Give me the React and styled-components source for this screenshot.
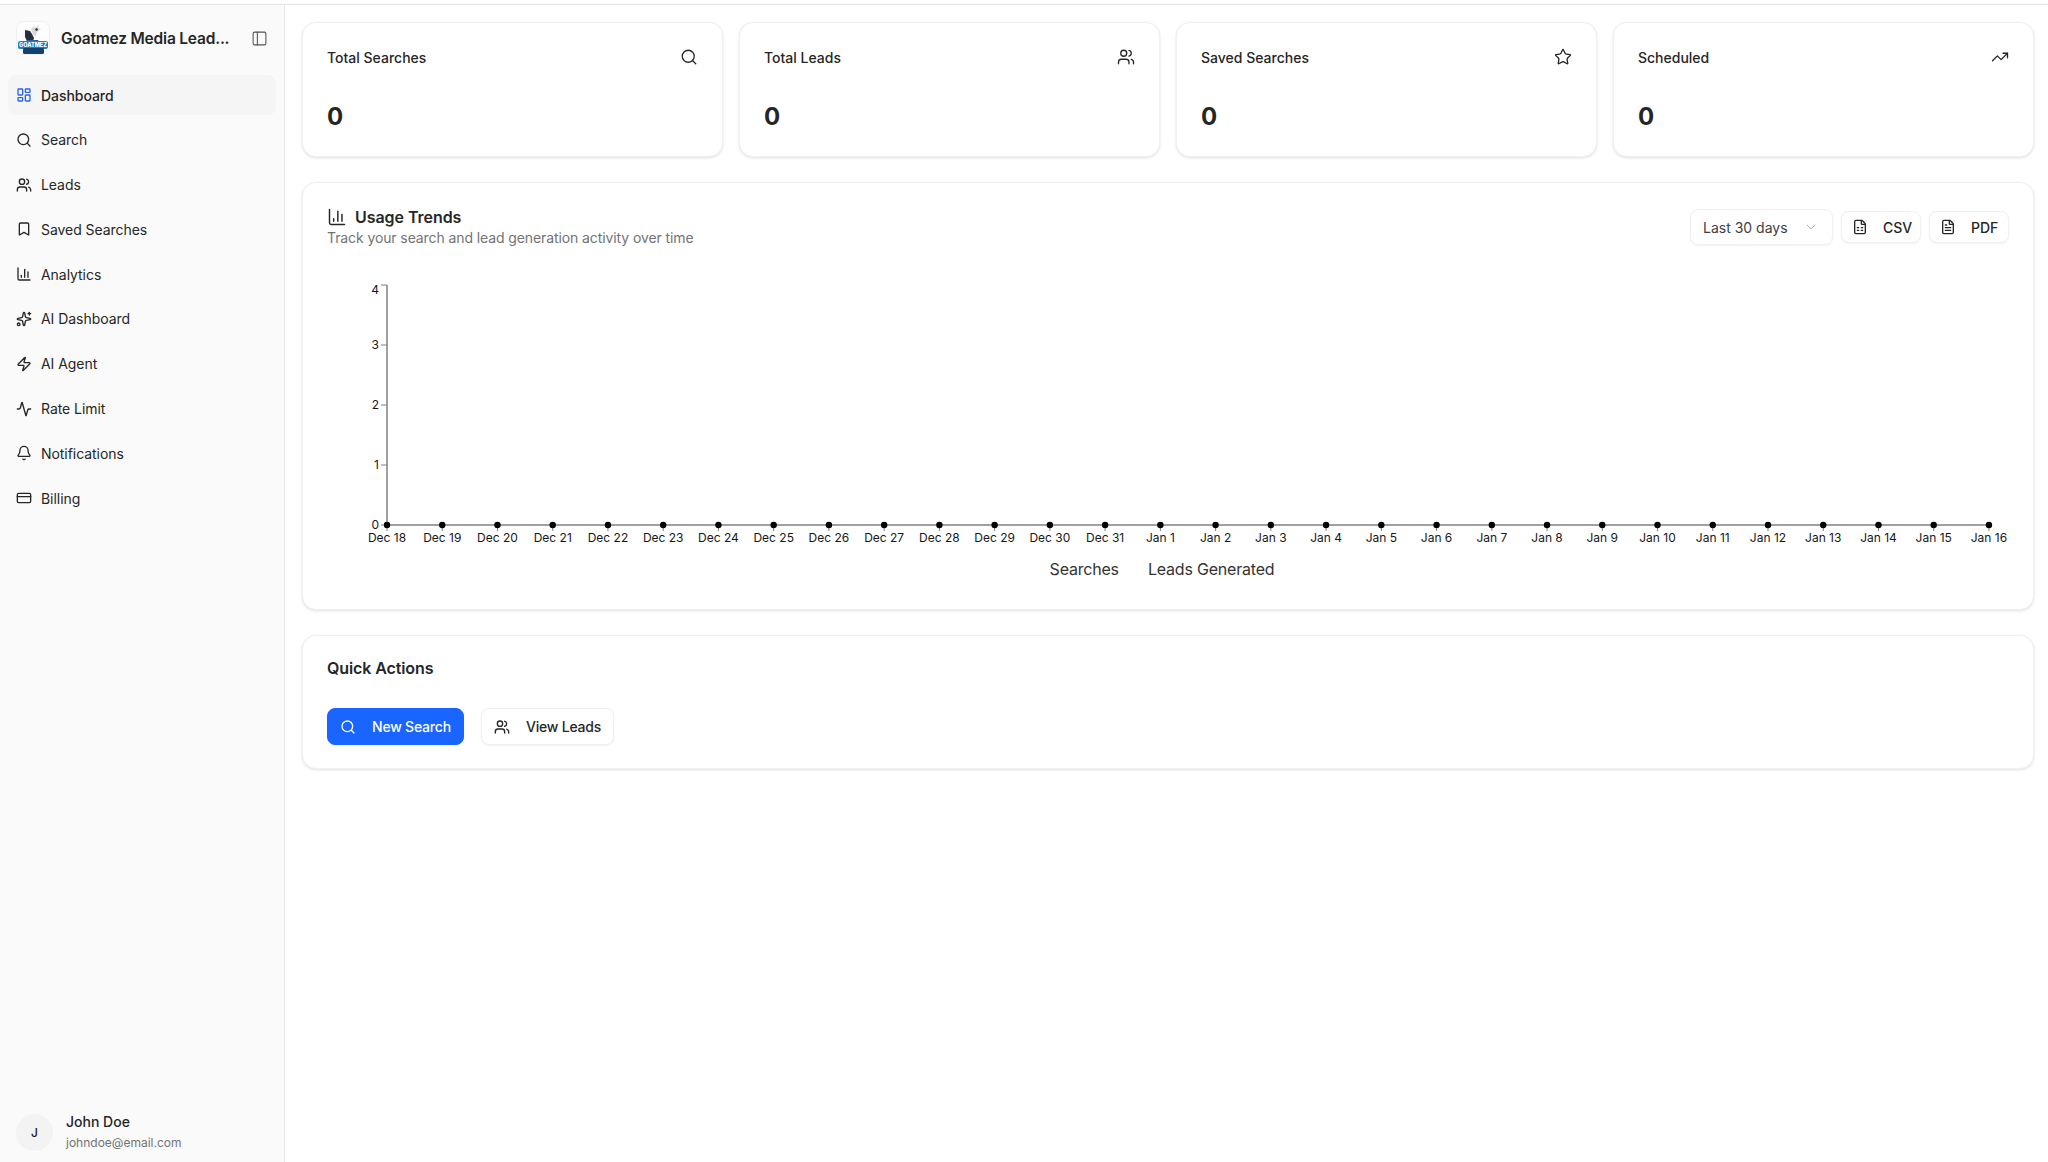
import styled, { createGlobalStyle } from "styled-components";
import {
  Activity,
  Bell,
  Bookmark,
  ChartColumn,
  ChevronDown,
  CreditCard,
  FileSpreadsheet,
  FileText,
  LayoutDashboard,
  PanelLeft,
  Search,
  Sparkles,
  Star,
  TrendingUp,
  Users,
  Zap,
} from "lucide-react";

const navItems = [
  { label: "Dashboard", icon: LayoutDashboard, active: true },
  { label: "Search", icon: Search },
  { label: "Leads", icon: Users },
  { label: "Saved Searches", icon: Bookmark },
  { label: "Analytics", icon: ChartColumn },
  { label: "AI Dashboard", icon: Sparkles },
  { label: "AI Agent", icon: Zap },
  { label: "Rate Limit", icon: Activity },
  { label: "Notifications", icon: Bell },
  { label: "Billing", icon: CreditCard },
];

const stats = [
  { title: "Total Searches", icon: Search },
  { title: "Total Leads", icon: Users },
  { title: "Saved Searches", icon: Star },
  { title: "Scheduled", icon: TrendingUp },
];

const dates = [
  "Dec 18", "Dec 19", "Dec 20", "Dec 21", "Dec 22", "Dec 23", "Dec 24", "Dec 25",
  "Dec 26", "Dec 27", "Dec 28", "Dec 29", "Dec 30", "Dec 31", "Jan 1", "Jan 2",
  "Jan 3", "Jan 4", "Jan 5", "Jan 6", "Jan 7", "Jan 8", "Jan 9", "Jan 10",
  "Jan 11", "Jan 12", "Jan 13", "Jan 14", "Jan 15", "Jan 16",
];

const CHART_LEFT = 60;
const CHART_STEP = 55.24;
const CHART_ZERO = 254;
const CHART_ROW = 60;

function Logo() {
  return (
    <LogoBox viewBox="0 0 34 34">
      <rect x="0.5" y="0.5" width="33" height="33" rx="7" fill="#fdfdfd" stroke="#efefef" />
      <path d="M9 9l5 1 2 3 2 4-1 3h-6l-2-4z" fill="#26303a" />
      <path d="M15 8l3-3 1 2 4-3-1 3 3 1-4 3-1 4-3-1-1-3z" fill="#dcd9de" />
      <path d="M19 8l2-1 1 2-2 1z" fill="#26303a" />
      <path d="M11 19h11l2 4H9z" fill="#2d5f9a" />
      <rect x="2" y="20" width="30" height="8" rx="2" fill="#1c7fc4" />
      <rect x="7" y="27" width="21" height="6" rx="1.5" fill="#12406f" />
      <LogoText x="17" y="26.2" textAnchor="middle">GOATMEZ</LogoText>
    </LogoBox>
  );
}

function Chart() {
  return (
    <ChartSvg height="280">
      <line x1={CHART_LEFT} y1={14} x2={CHART_LEFT} y2={CHART_ZERO} stroke="#808080" strokeWidth="1.5" />
      <line x1={CHART_LEFT} y1={CHART_ZERO} x2={CHART_LEFT + CHART_STEP * 29} y2={CHART_ZERO} stroke="#808080" strokeWidth="1.5" />
      {[0, 1, 2, 3, 4].map((n) => {
        const y = CHART_ZERO - n * CHART_ROW;
        return (
          <g key={n}>
            <line x1={CHART_LEFT - 6} y1={y} x2={CHART_LEFT} y2={y} stroke="#808080" />
            <AxisLabel x={CHART_LEFT - 8} y={n === 4 ? y + 9 : y + 4} textAnchor="end">
              {n}
            </AxisLabel>
          </g>
        );
      })}
      {dates.map((date, i) => {
        const x = CHART_LEFT + CHART_STEP * i;
        return (
          <g key={date}>
            <line x1={x} y1={CHART_ZERO} x2={x} y2={CHART_ZERO + 6} stroke="#808080" />
            <circle cx={x} cy={CHART_ZERO} r="3.2" fill="#000" />
            <AxisLabel x={x} y={CHART_ZERO + 17} textAnchor="middle">
              {date}
            </AxisLabel>
          </g>
        );
      })}
    </ChartSvg>
  );
}

export default function App() {
  return (
    <>
      <GlobalStyle />
      <Shell>
        <TopRule />
        <Body>
          <Sidebar>
            <Brand>
              <Logo />
              <BrandName>Goatmez Media Lead...</BrandName>
              <PanelLeft size={17} strokeWidth={1.5} color="#525252" />
            </Brand>
            <Nav>
              {navItems.map(({ label, icon: Icon, active }) => (
                <NavItem key={label} $active={active}>
                  <Icon size={16} strokeWidth={2} color={active ? "#2563eb" : "#262626"} />
                  {label}
                </NavItem>
              ))}
            </Nav>
            <UserRow>
              <Avatar>J</Avatar>
              <div>
                <UserName>John Doe</UserName>
                <UserEmail>johndoe@email.com</UserEmail>
              </div>
            </UserRow>
          </Sidebar>

          <Main>
            <StatGrid>
              {stats.map(({ title, icon: Icon }) => (
                <StatCard key={title}>
                  <StatHead>
                    <StatTitle>{title}</StatTitle>
                    <Icon size={18} strokeWidth={1.75} color="#262626" />
                  </StatHead>
                  <StatValue>0</StatValue>
                </StatCard>
              ))}
            </StatGrid>

            <TrendsCard>
              <TrendsHead>
                <div>
                  <TrendsTitle>
                    <ChartColumn size={20} strokeWidth={1.75} color="#262626" />
                    Usage Trends
                  </TrendsTitle>
                  <TrendsSub>Track your search and lead generation activity over time</TrendsSub>
                </div>
                <TrendsTools>
                  <RangeSelect>
                    Last 30 days
                    <ChevronDown size={16} strokeWidth={1.5} color="#b0b0b0" />
                  </RangeSelect>
                  <ExportButton>
                    <FileSpreadsheet size={16} strokeWidth={2} />
                    CSV
                  </ExportButton>
                  <ExportButton>
                    <FileText size={16} strokeWidth={2} />
                    PDF
                  </ExportButton>
                </TrendsTools>
              </TrendsHead>
              <Chart />
              <Legend>
                <span>Searches</span>
                <span>Leads Generated</span>
              </Legend>
            </TrendsCard>

            <ActionsCard>
              <ActionsTitle>Quick Actions</ActionsTitle>
              <ActionsRow>
                <ActionButton $primary>
                  <Search size={16} strokeWidth={2} />
                  New Search
                </ActionButton>
                <ActionButton>
                  <Users size={16} strokeWidth={2} />
                  View Leads
                </ActionButton>
              </ActionsRow>
            </ActionsCard>
          </Main>
        </Body>
      </Shell>
    </>
  );
}

const GlobalStyle = createGlobalStyle`
  body {
    margin: 0;
    background: #fff;
    color: #171717;
    font-family: Inter, "Liberation Sans", sans-serif;
  }
`;

const Shell = styled.div`
  display: flex;
  flex-direction: column;
  height: 100vh;
  overflow: hidden;
`;

const TopRule = styled.div`
  flex: none;
  height: 4px;
  border-bottom: 1px solid #e3e3e3;
`;

const Body = styled.div`
  display: flex;
  flex: 1;
  min-height: 0;
`;

const Sidebar = styled.aside`
  display: flex;
  flex-direction: column;
  flex: none;
  box-sizing: border-box;
  width: 285px;
  padding: 0 8px;
  background: #fafafa;
  border-right: 1px solid #e8e8e8;
`;

const Brand = styled.div`
  display: flex;
  align-items: center;
  height: 50px;
  margin-top: 8px;
  padding: 0 8px;
`;

const LogoBox = styled.svg`
  flex: none;
  width: 34px;
  height: 34px;
`;

const LogoText = styled.text`
  font-family: Inter, sans-serif;
  font-size: 5.5px;
  font-weight: 800;
  fill: #fff;
`;

const BrandName = styled.div`
  flex: 1;
  margin-left: 11px;
  font-size: 15.5px;
  font-weight: 600;
  letter-spacing: -0.2px;
  white-space: nowrap;
  color: #262626;
`;

const Nav = styled.nav`
  display: flex;
  flex-direction: column;
  gap: 4.8px;
  margin-top: 12px;
`;

const NavItem = styled.div`
  display: flex;
  align-items: center;
  gap: 9px;
  height: 40px;
  padding: 0 8px;
  border-radius: 8px;
  font-size: 14px;
  font-weight: ${(p) => (p.$active ? 500 : 400)};
  letter-spacing: -0.05px;
  color: #262626;
  background: ${(p) => (p.$active ? "#f5f5f5" : "transparent")};
`;

const UserRow = styled.div`
  display: flex;
  align-items: center;
  gap: 13px;
  margin-top: auto;
  padding: 0 8px 9px;
`;

const Avatar = styled.div`
  display: flex;
  align-items: center;
  justify-content: center;
  width: 37px;
  height: 37px;
  border-radius: 50%;
  background: #f3f3f3;
  font-size: 12px;
  font-weight: 500;
`;

const UserName = styled.div`
  font-size: 14px;
  font-weight: 500;
  line-height: 20px;
  color: #262626;
`;

const UserEmail = styled.div`
  font-size: 12px;
  line-height: 21px;
  color: #737373;
`;

const Main = styled.main`
  display: flex;
  flex-direction: column;
  flex: 1;
  gap: 25px;
  box-sizing: border-box;
  min-width: 0;
  padding: 17px 14px 0 17px;
`;

const Card = styled.section`
  box-sizing: border-box;
  background: #fff;
  border: 1px solid #f1f1f1;
  border-radius: 14px;
  box-shadow: 0 1px 3px rgba(0, 0, 0, 0.12);
`;

const StatGrid = styled.div`
  display: grid;
  grid-template-columns: repeat(4, 1fr);
  gap: 16px;
`;

const StatCard = styled(Card)`
  height: 135px;
  padding: 24px;
`;

const StatHead = styled.div`
  display: flex;
  align-items: center;
  justify-content: space-between;
  height: 20px;
`;

const StatTitle = styled.div`
  font-size: 14px;
  font-weight: 500;
  color: #262626;
`;

const StatValue = styled.div`
  margin-top: 34px;
  font-size: 24px;
  font-weight: 700;
  line-height: 32px;
  color: #262626;
`;

const TrendsCard = styled(Card)`
  height: 428px;
  padding: 23px 24px 24px;
`;

const TrendsHead = styled.div`
  display: flex;
  justify-content: space-between;
  height: 45px;
  margin-bottom: 20px;
`;

const TrendsTitle = styled.h3`
  display: flex;
  align-items: center;
  gap: 8px;
  margin: 0;
  font-size: 16px;
  font-weight: 600;
  letter-spacing: -0.05px;
  line-height: 22px;
  color: #262626;
`;

const TrendsSub = styled.div`
  font-size: 14px;
  letter-spacing: -0.1px;
  line-height: 20px;
  color: #737373;
`;

const TrendsTools = styled.div`
  display: flex;
  align-items: center;
  gap: 8px;
  height: 36px;
  margin-top: 3px;
`;

const RangeSelect = styled.div`
  display: flex;
  align-items: center;
  justify-content: space-between;
  box-sizing: border-box;
  width: 143px;
  height: 36px;
  padding: 0 13px 0 12px;
  border: 1px solid #f0f0f0;
  border-radius: 8px;
  box-shadow: 0 1px 2px rgba(0, 0, 0, 0.05);
  font-size: 14px;
  color: #404040;
`;

const ExportButton = styled.button`
  display: flex;
  align-items: center;
  gap: 15px;
  box-sizing: border-box;
  width: 80px;
  height: 32px;
  padding: 0 0 0 10px;
  background: #fff;
  border: 1px solid #f0f0f0;
  border-radius: 8px;
  box-shadow: 0 1px 2px rgba(0, 0, 0, 0.05);
  font-family: inherit;
  font-size: 14px;
  font-weight: 500;
  color: #262626;
`;

const ChartSvg = styled.svg`
  display: block;
  width: 100%;
`;

const AxisLabel = styled.text`
  font-family: Inter, "Liberation Sans", sans-serif;
  font-size: 12px;
  fill: #171717;
`;

const Legend = styled.div`
  display: flex;
  justify-content: center;
  gap: 29px;
  margin-top: 6px;
  padding-right: 12px;
  font-size: 16px;
  letter-spacing: -0.2px;
  line-height: 24px;
  color: #333;
`;

const ActionsCard = styled(Card)`
  height: 134px;
  padding: 20px 24px 24px;
`;

const ActionsTitle = styled.h3`
  margin: 0;
  font-size: 16px;
  font-weight: 600;
  letter-spacing: -0.1px;
  line-height: 24px;
  color: #262626;
`;

const ActionsRow = styled.div`
  display: flex;
  gap: 17px;
  margin-top: 28px;
`;

const ActionButton = styled.button`
  display: flex;
  align-items: center;
  gap: 16px;
  box-sizing: border-box;
  height: 37px;
  padding: 0 12px;
  border: 1px solid ${(p) => (p.$primary ? "#1a64ff" : "#f0f0f0")};
  border-radius: 8px;
  background: ${(p) => (p.$primary ? "#1a64ff" : "#fff")};
  color: ${(p) => (p.$primary ? "#fff" : "#262626")};
  box-shadow: 0 1px 2px rgba(0, 0, 0, 0.05);
  font-family: inherit;
  font-size: 14px;
  font-weight: 500;
  letter-spacing: -0.2px;
`;
